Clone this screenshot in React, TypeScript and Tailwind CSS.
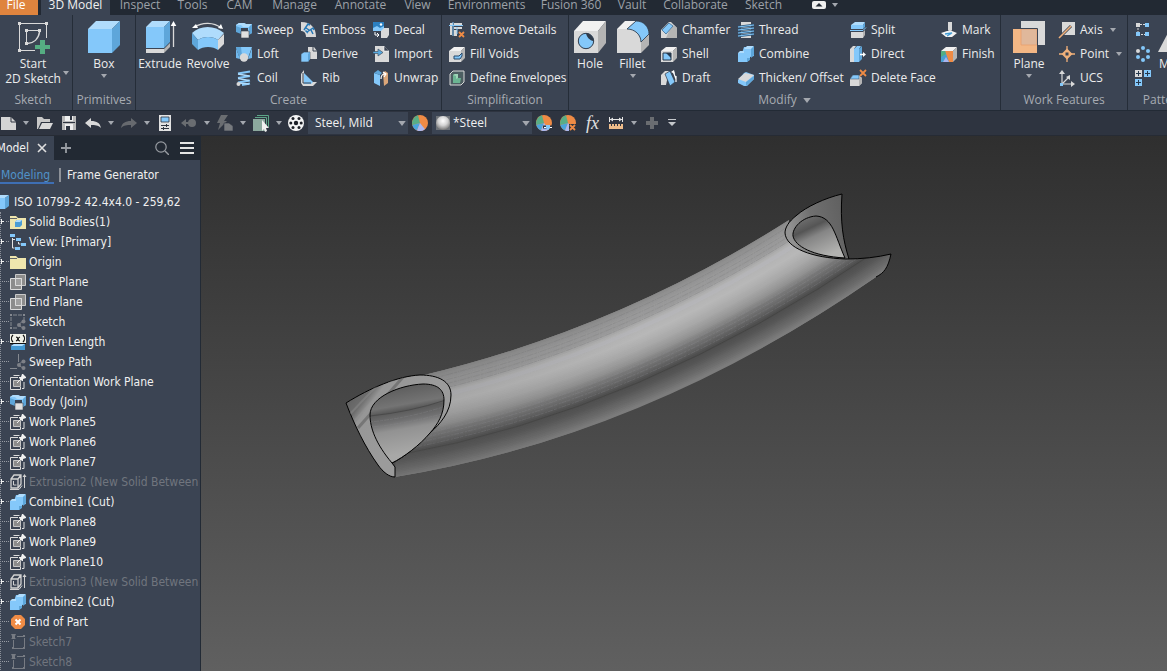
import React, { useState } from 'react';
import clsx from 'clsx';

const L = '#b0dcfc';
const B = '#84c8fa';
const D = '#5ea6da';
const G = '#d9d9d9';
const S = '#b4b4b4';
const O = '#ef8b45';

/* 32px icons for the large ribbon buttons */
const largeIcons: Record<string, React.ReactNode> = {
  sketch: (
    <>
      <path d="M2.500 4v24M4 2.500h24M29.500 4v13M4 29.500h14" fill="none" stroke={G} />
      <path d="M11 9.500h10M9.500 11v10" fill="none" stroke={G} />
      <path d="M22.500 11c-1 7-6 11-12 11.500" fill="none" stroke={G} strokeWidth="1.500" />
      <path d="M1 1h3v3H1zM28 1h3v3h-3zM1 28h3v3H1zM8 8h3v3H8zM21 8h3v3h-3zM8 21h3v3H8z" fill={G} />
      <path d="M23 19h5v5h5v4h-5v5h-5v-5h-5v-4h5z" fill="#55ad82" />
    </>
  ),
  box: (
    <>
      <path d="M0 8L8 0h24l-8 8z" fill={L} />
      <path d="M0 8h24v24H0z" fill={B} />
      <path d="M24 8l8-8v24l-8 8z" fill={D} />
    </>
  ),
  extrude: (
    <>
      <path d="M2 6l6-6h18l-6 6z" fill={L} />
      <path d="M2 6h18v21H2z" fill={B} />
      <path d="M20 6l6-6v21l-6 6z" fill={D} />
      <path d="M2 28h18v4H2z" fill={G} />
      <path d="M20 28l6-6v4l-6 6z" fill={S} />
      <path d="M29.500 3v23" stroke={G} strokeWidth="1.300" />
      <path d="M29.500 0l2.800 5h-5.600z" fill="#fff" />
    </>
  ),
  revolve: (
    <>
      <path d="M0 12C8 4 23 4 32 12l-6 7c-5-4-15-4-20 0z" fill={L} />
      <path d="M0 12l6 7v10l-6-6z" fill={D} />
      <path d="M6 19c5-4 15-4 20 0v10c-5-4-15-4-20 0z" fill={B} />
      <path d="M26 19l6-6v10l-6 6z" fill={G} />
      <path d="M3 6c7-5 19-5 26 1" fill="none" stroke={G} strokeWidth="1.300" />
      <path d="M0 7l4-4 2 4zM31 8l-5-1 3-4z" fill="#fff" />
    </>
  ),
  hole: (
    <>
      <path d="M0 10L9 0h23l-8 10z" fill="#f1f1f1" />
      <path d="M0 10h24v22H0z" fill={G} />
      <path d="M24 10l8-10v22l-8 10z" fill={S} />
      <circle cx="12" cy="20" r="7.700" fill={B} stroke="#2f3b4b" />
      <path d="M12 12.300a7.700 7.700 0 0 1 7.700 8c-4-1-7-4-7.700-8z" fill="#2f3b4b" />
    </>
  ),
  fillet: (
    <>
      <path d="M0 8L8 0h11l-9 8z" fill="#f1f1f1" />
      <path d="M0 8h10c8 0 14 6 14 14v10H0z" fill={G} />
      <path d="M24 21l8-8v11l-8 8z" fill={S} />
      <path d="M10 8l9-8c8 0 13 6 13 13l-8 8C24 14 18 8 10 8z" fill={B} stroke="#2f3b4b" strokeWidth=".8" />
    </>
  ),
  plane: (
    <>
      <path d="M8 0h24v24H8z" fill={G} />
      <path d="M0 8h24v24H0z" fill="#f3b785" />
      <path d="M8 8h16v16H8z" fill="#e0b89b" stroke="#e8a06c" strokeWidth=".8" />
      <path d="M8 7.500h16.500V24" fill="none" stroke="#3b4453" />
    </>
  ),
  mirror: <path d="M-3 31L9 8v23z" fill={G} />,
};

const pageShape = <path d="M7 1h6l3 4v8H7z" fill={G} />;
const cross = <path d="M10 10l5 5M15 10l-5 5" stroke={O} strokeWidth="1.800" />;
const cube = (
  <>
    <path d="M0 5l5-4h11l-4 4z" fill="#f1f1f1" />
    <path d="M0 5h12v11H0z" fill={G} />
    <path d="M12 5l4-4v11l-4 4z" fill={S} />
  </>
);
const colorWheel = (
  <>
    <circle cx="8" cy="8" r="8" fill={O} />
    <path d="M8 8L6 .3A8 8 0 0 0 .3 10z" fill="#58ae86" />
    <path d="M8 8L.3 10A8 8 0 0 0 5 15.400z" fill="#4aa5dc" />
    <path d="M8 8l-3 7.400a8 8 0 0 0 8-1.200z" fill="#a9b7ef" />
  </>
);
const joined = (
  <>
    <path d="M0 7h4l2-6h10v9l-4 1v2l-3 3H0z" fill={B} />
    <path d="M6 3l3-3h7l-3 3zM0 7l2-2h4v2z" fill={L} />
    <path d="M13 3l3-3v9l-3 3zM9 12h3v2l-3 2z" fill={D} />
  </>
);
const shareMark = (
  <>
    <path d="M13 7l-5 4 5 3" fill="none" stroke="#7d8087" />
    <g fill="#7d8087">
      <circle cx="13.500" cy="7.500" r="2" />
      <circle cx="9" cy="11" r="2" />
      <circle cx="13.500" cy="14" r="2" />
    </g>
  </>
);

/* 16px icons shared by the ribbon, the quick access bar and the browser */
const smallIcons: Record<string, React.ReactNode> = {
  sweep: (
    <>
      <path d="M0 3l3-2h5l2 1h6v9l-4 2V6H0z" fill={B} />
      <path d="M0 3l3-2h5l2 1h6l-3 3H7L5 3z" fill={L} />
      <path d="M0 4l5 2v6L0 10zM13 5l3-3v9l-3 2z" fill={D} />
      <path d="M5 9h8v7H5z" fill="#e0e0e0" stroke="#3b4453" strokeWidth=".6" />
    </>
  ),
  loft: (
    <>
      <path d="M0 1h16l-4 11H4z" fill={B} />
      <path d="M0 1h5l1 9-2 3z" fill={D} />
      <path d="M0 2v10l4 1zM16 2v10l-4 1z" fill="#71b8ec" />
      <circle cx="8" cy="11.500" r="4.200" fill={G} />
    </>
  ),
  coil: (
    <>
      <path d="M2 3.500l12-2M2 8l12-2M2 12.500l12-2M6 15l8-1.500" stroke={B} strokeWidth="2.200" />
      <path d="M2 4l11 2M2 8.500l11 2M3 13l10 1" stroke={L} strokeWidth="1.300" />
      <circle cx="2.500" cy="14" r="2" fill={G} />
    </>
  ),
  emboss: (
    <>
      <path d="M0 0c10 0 15 6 15 15H5C5 11 3 9 0 9z" fill={G} />
      <path d="M3 8l4-6 2 1M5 6l3 2M6 10l6-4 1 2M4.500 8.500L7 11M10 8l2 4" fill="none" stroke="#2578b7" strokeWidth="1.500" />
    </>
  ),
  derive: (
    <>
      {pageShape}
      <path d="M0 8l3-2h6v7l-2 3H0z" fill={B} stroke="#3b4453" strokeWidth=".6" />
      <path d="M7 8l2-2v7l-2 3z" fill={D} />
      <path d="M12 1v4h4" fill="none" stroke="#3b4453" />
    </>
  ),
  rib: (
    <>
      <path d="M0 4l3-4v9l8 3h5l-4 4H2l-2-3z" fill={G} />
      <path d="M3 3l9 9-2 2H3z" fill={B} />
      <path d="M2 3v10h8" fill="none" stroke="#3b4453" />
    </>
  ),
  decal: (
    <>
      <path d="M0 0h11v9H0z" fill="#2b7fc0" />
      <path d="M0 6l4-2 3 2 4-2v5H0z" fill={B} />
      <circle cx="8" cy="2.500" r="1.200" fill="#fff" />
      <path d="M8 9l3-3h5v7l-2 3H8z" fill={G} />
      <path d="M2 10v3h4M4 11l2 2-2 2" fill="none" stroke="#fff" />
    </>
  ),
  import: (
    <>
      <path d="M2 0h9l5 5v11H2z" fill={G} />
      <path d="M11 0v5h5" fill="#3b4453" stroke="#fff" strokeWidth=".6" />
      <path d="M0 5.500h5V3l5 3.500L5 10V7.500H0z" fill="#58a9df" stroke="#3b4453" strokeWidth=".6" />
    </>
  ),
  unwrap: (
    <>
      <path d="M1 3l6 2v11l-6-3z" fill={B} />
      <path d="M1 3l4-3 4 3-2 2z" fill={D} />
      <path d="M10 3l2-2 3 2v10l-4 3z" fill="#dba679" />
      <path d="M8 9c0-3 1-5 4-5M10 2l3 2-2 3" fill="none" stroke="#fff" strokeWidth="1.200" />
    </>
  ),
  removeDetails: (
    <>
      <path d="M1 1h3v2H1zM5 1h8v2H5zM1 4h2v9H1zM5 5h8v2H5zM5 8h3v6H5z" fill={G} />
      <path d="M4 0v14M0 3.500h14M8 5v7" stroke={B} />
      {cross}
    </>
  ),
  fillVoids: (
    <>
      {cube}
      <path d="M5 10h5l3-3v3l-2 3H5z" fill={B} stroke="#26496b" />
    </>
  ),
  envelopes: (
    <>
      <path d="M1 4l3-3h11v11l-3 3H1z" fill="#4d5f62" stroke={G} />
      <path d="M4 5l2-1h3v4h3l-1 5H4z" fill="#6bb592" />
      <path d="M4 5l2-1h3v4l-2 1V6z" fill="#9dd3b6" />
    </>
  ),
  chamfer: (
    <>
      <path d="M0 8l8-8h2l6 6v10H0z" fill={G} />
      <path d="M8 9l5-6 3 3v10H5z" fill={S} />
      <path d="M1 8l7-7 4 3-7 8z" fill={B} stroke="#2f5f87" strokeWidth=".7" />
    </>
  ),
  shell: (
    <>
      {cube}
      <path d="M2 7h8v7H2z" fill={B} stroke="#26394d" />
      <path d="M5 7h5v5z" fill="#26394d" />
    </>
  ),
  draft: (
    <>
      <path d="M0 5l4-4h4L5 15H0z" fill={G} />
      <path d="M4 4l5-3 5 11-5 4z" fill={B} stroke="#2f3b4b" strokeWidth=".7" />
      <path d="M12 1l3 8M15 12V6" fill="none" stroke="#fff" strokeWidth="1.200" />
      <path d="M10 2l3-2 1 4z" fill="#fff" />
    </>
  ),
  thread: (
    <>
      <path d="M3 0h10v16H3z" fill={G} />
      <path d="M0 5l16-2M0 8l16-2M0 11l16-2M0 14l16-2" stroke="#2d5272" strokeWidth="2.400" />
      <path d="M0 5l16-2M0 8l16-2M0 11l16-2M0 14l16-2" stroke={B} strokeWidth="1.200" />
    </>
  ),
  combine: joined,
  thicken: (
    <>
      <path d="M0 10l6-7 2-1 8 3v4l-7 7H6l-6-3z" fill={B} />
      <path d="M0 9l7-6 9 2-8 7z" fill={G} />
      <path d="M8 12l8-6v3l-8 7z" fill={D} />
    </>
  ),
  split: (
    <>
      <path d="M1 3l4-3h10l-2 3z" fill={L} />
      <path d="M1 3h12v4H1z" fill={B} />
      <path d="M13 3l2-3v5l-2 2z" fill={D} />
      <path d="M0 8.500h13l3-3" fill="none" stroke={B} />
      <path d="M1 10h12v6H1z" fill={G} />
      <path d="M13 10l2-2v5l-2 3z" fill={S} />
    </>
  ),
  direct: (
    <>
      <path d="M0 3l3-3h3L4 3v13H0z" fill={G} />
      <path d="M4 3l3-3h4L9 3v13H4z" fill={B} />
      <path d="M9 3l3-3v13l-3 3z" fill={D} />
      <path d="M10 8.500h4" stroke="#fff" strokeWidth="1.500" />
      <path d="M13 6l3 2.500-3 2.500z" fill="#fff" />
    </>
  ),
  deleteFace: (
    <>
      <path d="M0 9l3-4h6l3 4v4l-3 3H0z" fill={G} />
      <path d="M9 9l3-2v6l-3 3z" fill={S} />
      <path d="M0 9l3-4h6v4z" fill={B} stroke="#30445a" strokeWidth=".5" />
      <path d="M10 0l6 6M16 0l-6 6" stroke={O} strokeWidth="1.800" />
    </>
  ),
  mark: (
    <>
      <path d="M7 0h4v8l-2 3-2-3z" fill={G} />
      <path d="M0 11l6-2h5l5 2-5 4H5z" fill="#f2f2f2" />
      <path d="M4 12l7-1-5 3" fill="none" stroke="#409bd5" strokeWidth="1.300" />
    </>
  ),
  finish: (
    <>
      {cube}
      <path d="M0 5h12v11H0z" fill={O} />
      <path d="M0 5h4l4 11H0z" fill="#4a9fd0" />
      <path d="M0 5h4l1 3-5 3z" fill="#54ae82" />
      <path d="M5 11l3 5H2z" fill="#aab4ef" />
    </>
  ),
  axis: (
    <>
      <path d="M3 0h13v13H3z" fill={G} />
      <path d="M0 16L12 4" stroke="#3b4453" strokeWidth="3" />
      <path d="M0 16L12 4" stroke="#f0b07a" strokeWidth="1.600" />
    </>
  ),
  point: (
    <>
      <path d="M8 0v16M0 8h16" stroke="#f0b07a" strokeWidth="1.300" />
      <path d="M8 2.500L13.500 8 8 13.500 2.500 8z" fill="#f0b07a" />
      <path d="M6.500 6.500h3v3h-3z" fill="#3b4453" />
    </>
  ),
  ucs: (
    <>
      <path d="M3 13V2M3 14h11M4 13l6-6" fill="none" stroke={G} strokeWidth="1.200" />
      <path d="M3 0l3 4H0zM16 14l-4 3v-6zM11 5v5L7 7z" fill={G} />
      <path d="M1 13h3v3H1z" fill={B} />
    </>
  ),
  rectPattern: (
    <>
      <path d="M5 2.500h6M3 6v5M6 12.500h5" stroke={G} strokeDasharray="2 1" />
      <path d="M1 1h4v4H1z" fill={G} />
      <path d="M10 1h4v4h-4zM1 10h4v4H1zM10 10h4v4h-4z" fill={B} />
    </>
  ),
  circPattern: (
    <>
      <circle cx="3" cy="5" r="2" fill={G} />
      <g fill={B}>
        <circle cx="8" cy="2" r="2" />
        <circle cx="13" cy="5" r="2" />
        <circle cx="13" cy="11" r="2" />
        <circle cx="8" cy="14" r="2" />
        <circle cx="3" cy="11" r="2" />
      </g>
    </>
  ),
  sketchPattern: (
    <>
      <path d="M0 0h7v7H0z" fill={G} />
      <path d="M9 0h7v7H9zM0 9h7v7H0z" fill={B} />
      <path d="M3.500 1v5M1 3.500h5M12.500 1v5M10 3.500h5M3.500 10v5M1 12.500h5" stroke="#26394d" />
    </>
  ),
  newFile: (
    <>
      <path d="M1 2h10l5 5v8H1z" fill="#d4d4d4" />
      <path d="M11 2v5h5" fill="none" stroke="#2e3440" />
    </>
  ),
  open: (
    <>
      <path d="M0 2h5l2 2h6v3H4L1 14H0z" fill="#c8c8c8" />
      <path d="M5 8h11l-3 6H2z" fill="#d9d9d9" />
    </>
  ),
  save: (
    <>
      <path d="M1 1h14v14H1z" fill="#b9b9b9" />
      <path d="M4 1h8v5H4zM4 9h8v6H4z" fill="#efefef" />
      <path d="M9 1h2v4H9zM5 11h4v4H5zM2 7h12v1H2z" fill="#2e3440" />
    </>
  ),
  undo: <path d="M0 8l6-5v3c6 0 9 2 10 7-3-3-6-3-10-3v3z" fill="#d9d9d9" />,
  redo: <path d="M16 8l-6-5v3C4 6 1 8 0 13c3-3 6-3 10-3v3z" fill="#66696e" />,
  properties: (
    <>
      <path d="M2 0h12v16H2z" fill="#e2e2e2" />
      <path d="M4 2h8v5H4z" fill={B} stroke="#2e3440" strokeWidth=".8" />
      <path d="M4 10.500h8M4 13.500h8M9.500 9v3M6.500 12v3" stroke="#2e3440" />
    </>
  ),
  back: (
    <>
      <circle cx="11" cy="8" r="4" fill="#6a6d71" />
      <path d="M0 8l5-4v8zM4 7h7v2H4z" fill="#6a6d71" />
    </>
  ),
  update: (
    <>
      <path d="M4 0h7L7 6h3L1 15l2-7H0z" fill="#6a6d71" />
      <path d="M7 8h5l4 3v5H7z" fill="#777a7e" stroke="#2e3440" strokeWidth=".6" />
    </>
  ),
  selectFilter: (
    <>
      <path d="M4 .5h11.500V12M2 2.500h11.500V12" fill="none" stroke="#5da588" />
      <path d="M0 4h12v12H0z" fill="#8ca99e" />
      <path d="M9 5l7 8h-3l1 3-2 1-1-3-2 2z" fill="#f2f2f2" />
    </>
  ),
  ball: (
    <>
      <circle cx="8" cy="8" r="8" fill="#f4f4f4" />
      <g fill="#1c1f26">
        <circle cx="8" cy="8" r="2.200" />
        <circle cx="5" cy="3.500" r="1.500" />
        <circle cx="11" cy="3.500" r="1.500" />
        <circle cx="2.800" cy="8" r="1.500" />
        <circle cx="13.200" cy="8" r="1.500" />
        <circle cx="5" cy="12.500" r="1.500" />
        <circle cx="11" cy="12.500" r="1.500" />
      </g>
    </>
  ),
  wheel: colorWheel,
  adjust: (
    <>
      {colorWheel}
      <path d="M7 12h9" stroke="#2e3440" strokeWidth="3" />
      <path d="M8 12.500h8" stroke="#fff" />
      <path d="M10 10h4v3l-2 2-2-2z" fill={B} />
    </>
  ),
  clear: (
    <>
      {colorWheel}
      <path d="M9 9h7v7H9z" fill="#2e3440" />
      {cross}
    </>
  ),
  measure: (
    <>
      <path d="M1.500 2v5M14.500 2v5M2 4.500h12" stroke="#e5e5e5" />
      <path d="M5 2.500v4l-3-2zM11 2.500v4l3-2z" fill="#e5e5e5" />
      <path d="M1 9h14v5H1z" fill="#eebc8a" />
      <path d="M3.500 9v2M6.500 9v2M9.500 9v2M12.500 9v2" stroke="#2e3440" />
    </>
  ),
  plus: <path d="M6 2h4v4h4v4h-4v4H6v-4H2V6h4z" fill="#6a6d71" />,
  part: (
    <>
      <path d="M0 4l4-3h10l-4 3z" fill={L} />
      <path d="M0 4h10v11H0z" fill={B} />
      <path d="M10 4l4-3v11l-4 3z" fill={D} />
    </>
  ),
  folder: (
    <>
      <path d="M0 2h6l2 2h8v11H0z" fill="#efe6ae" />
      <path d="M0 4.500h7" stroke="#3b4453" strokeWidth=".8" />
    </>
  ),
  bodies: (
    <>
      <path d="M0 2h6l2 2h8v11H0z" fill="#efe6ae" />
      <path d="M0 4.500h7" stroke="#3b4453" strokeWidth=".8" />
      <path d="M5 8l2-2h5v5l-2 2H5z" fill="#4c9dd5" />
      <path d="M5 8l2-2h5l-2 2z" fill={L} />
    </>
  ),
  view: (
    <>
      <path d="M0 0h5v3H0zM6 4h5v3H6zM11 9h5v3h-5zM5 13h5v3H5z" fill={B} />
      <path d="M2.500 4v10h2M3 5.500h2M8.500 8v2h2" fill="none" stroke="#e2e2e2" />
    </>
  ),
  plainPlane: (
    <>
      <path d="M5.500.5h10v11h-10z" fill="#8c8c8c" stroke="#c9c9c9" />
      <path d="M.5 4.500h11v11H.5z" fill="#8c8c8c" stroke="#dcdcdc" />
      <path d="M5.500 4.500h6v7h-6z" fill="#a0a0a0" stroke="#dcdcdc" />
    </>
  ),
  sharedSketch: (
    <>
      <path d="M1 3v9M3 1h9M14 3v3M3 14h4" stroke="#858990" strokeDasharray="4 1" />
      <path d="M0 0h2v2H0zM13 0h2v2h-2zM0 13h2v2H0z" fill="#858990" />
      {shareMark}
    </>
  ),
  sharedPath: (
    <>
      <path d="M8.500 0v8M0 14.500h7" stroke="#858990" />
      {shareMark}
    </>
  ),
  parameter: (
    <>
      <path d="M0 0h16v9H0z" fill="#f1f1e8" />
      <path d="M3 1C1 3 1 6 3 8M13 1c2 2 2 5 0 7M6 3c3 0 1 4 4 4M10 3C7 4 9 6 6 7" fill="none" stroke="#111" strokeWidth="1.200" />
      <path d="M0 9h16v1H0z" fill="#111" />
      <path d="M1 12l3-2h11v6H1z" fill="#4398d2" />
      <path d="M1 12l3-2h11l-3 2z" fill={L} />
    </>
  ),
  pinnedPlane: (
    <>
      <path d="M8 3.500H.5v12h10V13M3.500 1.500h6M14 8v6.500h-2" fill="none" stroke="#dcdcdc" />
      <path d="M3.500 6.500h7v6h-7z" fill="#8c8c8c" stroke="#c4c4c4" />
      <path d="M7 9l4-4" stroke="#f0f0f0" />
      <path d="M9 3h2l1-3h1l3 3v1l-3 1v2h-1L9 4z" fill="#f0f0f0" />
    </>
  ),
  extrusion: (
    <>
      <path d="M1 5l3-4h7v9l-3 4H1zM1 5h7v9M8 5l3-4" fill="none" stroke="#d2d2d2" strokeWidth="1.300" />
      <path d="M3.500 7v4h3M0 15.500h9l3-4M14.500 2v12" fill="none" stroke="#d2d2d2" />
      <path d="M14.500 0l2 3h-4z" fill="#d2d2d2" />
    </>
  ),
  endOfPart: (
    <>
      <path d="M5 1h6l4 4v6l-4 4H5l-4-4V5z" fill={O} />
      <path d="M5.500 5.500l5 5M10.500 5.500l-5 5" stroke="#fff" strokeWidth="2" />
    </>
  ),
  pinnedSketch: (
    <>
      <path d="M3.500 6v8.500h10M14.500 4v9M7 2.500h6" fill="none" stroke="#777b83" />
      <path d="M1 0h5L5 2v2l1 1H1l1-1V2zM13 1h2v2h-2zM2 13h2v2H2zM13 13h2v2h-2z" fill="#777b83" />
    </>
  ),
};

function Icon({ name, className }: { name: string; className?: string }) {
  return (
    <svg viewBox="0 0 16 16" className={clsx('h-4 w-4 shrink-0 overflow-visible', className)} aria-hidden="true">
      {smallIcons[name]}
    </svg>
  );
}

function Caret({ className }: { className?: string }) {
  return (
    <svg viewBox="0 0 6 4" className={clsx('h-1 w-1.5 shrink-0', className)} aria-hidden="true">
      <path d="M0 0h6L3 4z" fill="#a4a8af" />
    </svg>
  );
}

type BigProps = { icon: string; lines: string[]; caret?: boolean; className: string };

function BigButton({ icon, lines, caret, className }: BigProps) {
  return (
    <button className={clsx('flex shrink-0 flex-col items-center pt-[3px] text-[#ececec]', className)}>
      <svg viewBox="0 0 32 32" className="mb-[3px] h-8 w-8 shrink-0 overflow-visible" aria-hidden="true">
        {largeIcons[icon]}
      </svg>
      {lines.map((line) => (
        <span key={line} className="leading-[15px] whitespace-nowrap">
          {line}
        </span>
      ))}
      {caret && <Caret className="mt-[3px]" />}
    </button>
  );
}

type Command = { icon: string; label: string; caret?: boolean };

function CommandColumn({ items, className }: { items: Command[]; className: string }) {
  return (
    <div className={clsx('flex shrink-0 flex-col', className)}>
      {items.map((item) => (
        <button key={item.icon} className="flex h-6 items-center gap-[5px] whitespace-nowrap text-[#ececec]">
          <Icon name={item.icon} />
          <span>{item.label}</span>
          {item.caret && <Caret className="ml-0.5" />}
        </button>
      ))}
    </div>
  );
}

type PanelProps = { title: string; className: string; caret?: boolean; children: React.ReactNode };

function RibbonPanel({ title, className, caret, children }: PanelProps) {
  return (
    <section className={clsx('flex shrink-0 flex-col border-r border-[#252d38] pt-[3px]', className)}>
      <div className="flex h-[72px]">{children}</div>
      <h2 className="flex h-5 items-center justify-center gap-1.5 whitespace-nowrap text-[#a7abb2]">
        {title}
        {caret && <Caret className="h-[5px] w-2" />}
      </h2>
    </section>
  );
}

const tabs = [
  { label: 'Inspect', width: 'w-[58px]' },
  { label: 'Tools', width: 'w-[47px]' },
  { label: 'CAM', width: 'w-[47px]' },
  { label: 'Manage', width: 'w-[63px]' },
  { label: 'Annotate', width: 'w-[69px]' },
  { label: 'View', width: 'w-[45px]' },
  { label: 'Environments', width: 'w-[93px]' },
  { label: 'Fusion 360', width: 'w-[76px]' },
  { label: 'Vault', width: 'w-[46px]' },
  { label: 'Collaborate', width: 'w-[81px]' },
  { label: 'Sketch', width: 'w-[55px]' },
];

function TabStrip() {
  return (
    <nav className="flex h-[15px] shrink-0 items-start bg-[#222933] leading-[10px] text-[#9da1a8]">
      <button className="h-full w-[38px] shrink-0 bg-[#df843e] pr-1.5 pb-[5px] text-white">File</button>
      <button className="ml-[3px] h-full w-[69px] shrink-0 bg-[#3b4453] pb-[5px] whitespace-nowrap text-[#f0f0f0]">
        3D Model
      </button>
      <div className="flex pl-px">
        {tabs.map((tab) => (
          <button key={tab.label} className={clsx('shrink-0 whitespace-nowrap', tab.width)}>
            {tab.label}
          </button>
        ))}
      </div>
      <button aria-label="Minimize ribbon" className="ml-[21px] flex items-center gap-1.5 pt-px">
        <svg viewBox="0 0 14 8" className="h-2 w-3.5">
          <rect width="14" height="8" rx="2" fill="#efefef" />
          <path d="M3.500 5.500h7L7 2z" fill="#222933" />
        </svg>
        <Caret />
      </button>
    </nav>
  );
}

function Ribbon() {
  return (
    <div className="flex shrink-0 overflow-hidden border-b border-[#222a35] bg-[#3b4453]">
      <RibbonPanel title="Sketch" className="w-[73px] pr-1.5">
        <div className="relative flex w-full justify-center">
          <BigButton icon="sketch" lines={['Start', '2D Sketch']} className="w-full" />
          <Caret className="absolute top-[53px] -right-[3px]" />
        </div>
      </RibbonPanel>

      <RibbonPanel title="Primitives" className="w-[63px]">
        <BigButton icon="box" lines={['Box']} caret className="w-full" />
      </RibbonPanel>

      <RibbonPanel title="Create" className="w-[306px]">
        <BigButton icon="extrude" lines={['Extrude']} className="w-12" />
        <BigButton icon="revolve" lines={['Revolve']} className="mr-1 w-12" />
        <CommandColumn
          className="w-[65px]"
          items={[
            { icon: 'sweep', label: 'Sweep' },
            { icon: 'loft', label: 'Loft' },
            { icon: 'coil', label: 'Coil' },
          ]}
        />
        <CommandColumn
          className="w-[72px]"
          items={[
            { icon: 'emboss', label: 'Emboss' },
            { icon: 'derive', label: 'Derive' },
            { icon: 'rib', label: 'Rib' },
          ]}
        />
        <CommandColumn
          className="w-16"
          items={[
            { icon: 'decal', label: 'Decal' },
            { icon: 'import', label: 'Import' },
            { icon: 'unwrap', label: 'Unwrap' },
          ]}
        />
      </RibbonPanel>

      <RibbonPanel title="Simplification" className="w-[127px]">
        <CommandColumn
          className="pl-[7px]"
          items={[
            { icon: 'removeDetails', label: 'Remove Details' },
            { icon: 'fillVoids', label: 'Fill Voids' },
            { icon: 'envelopes', label: 'Define Envelopes' },
          ]}
        />
      </RibbonPanel>

      <RibbonPanel title="Modify" caret className="w-[432px]">
        <BigButton icon="hole" lines={['Hole']} className="w-[42px]" />
        <BigButton icon="fillet" lines={['Fillet']} caret className="mr-[7px] w-[43px]" />
        <CommandColumn
          className="w-[77px]"
          items={[
            { icon: 'chamfer', label: 'Chamfer' },
            { icon: 'shell', label: 'Shell' },
            { icon: 'draft', label: 'Draft' },
          ]}
        />
        <CommandColumn
          className="w-28"
          items={[
            { icon: 'thread', label: 'Thread' },
            { icon: 'combine', label: 'Combine' },
            { icon: 'thicken', label: 'Thicken/ Offset' },
          ]}
        />
        <CommandColumn
          className="w-[91px]"
          items={[
            { icon: 'split', label: 'Split' },
            { icon: 'direct', label: 'Direct' },
            { icon: 'deleteFace', label: 'Delete Face' },
          ]}
        />
        <CommandColumn
          className="w-14"
          items={[
            { icon: 'mark', label: 'Mark' },
            { icon: 'finish', label: 'Finish' },
          ]}
        />
      </RibbonPanel>

      <RibbonPanel title="Work Features" className="w-[127px]">
        <BigButton icon="plane" lines={['Plane']} caret className="mr-0.5 w-14" />
        <CommandColumn
          className="w-16"
          items={[
            { icon: 'axis', label: 'Axis', caret: true },
            { icon: 'point', label: 'Point', caret: true },
            { icon: 'ucs', label: 'UCS' },
          ]}
        />
      </RibbonPanel>

      <RibbonPanel title="Pattern" className="w-[72px]">
        <CommandColumn
          className="w-[29px] pl-[7px]"
          items={[
            { icon: 'rectPattern', label: '' },
            { icon: 'circPattern', label: '' },
            { icon: 'sketchPattern', label: '' },
          ]}
        />
        <BigButton icon="mirror" lines={['Mirror']} className="w-10" />
      </RibbonPanel>
    </div>
  );
}

function ToolButton({ icon, label, caret, className }: { icon: string; label: string; caret?: boolean; className: string }) {
  return (
    <button aria-label={label} className={clsx('flex shrink-0 items-center gap-[7px]', className)}>
      <Icon name={icon} />
      {caret && <Caret />}
    </button>
  );
}

function Combo({ label, value, swatch }: { label: string; value: string; swatch?: boolean }) {
  return (
    <div className="relative flex h-[22px] w-[100px] shrink-0 items-center bg-[#3b4453]">
      {swatch && (
        <svg viewBox="0 0 16 16" className="ml-[3px] h-4 w-4 shrink-0" aria-hidden="true">
          <defs>
            <radialGradient id="steel" cx=".5" cy=".35" r=".65">
              <stop offset="0" stopColor="#fff" />
              <stop offset=".5" stopColor="#d4d4d4" />
              <stop offset="1" stopColor="#777" />
            </radialGradient>
          </defs>
          <path d="M1 1h14v14H1z" fill="#6d7278" />
          <circle cx="8" cy="8" r="7" fill="url(#steel)" />
        </svg>
      )}
      <select
        aria-label={label}
        className={clsx('min-w-0 flex-1 appearance-none bg-transparent text-[#f0f0f0] outline-none', swatch ? 'pl-0.5' : 'pl-[7px]')}
      >
        <option>{value}</option>
      </select>
      <Caret className="pointer-events-none absolute right-0.5 h-[5px] w-2" />
    </div>
  );
}

function QuickAccessBar() {
  return (
    <div className="flex h-[25px] shrink-0 items-center overflow-hidden border-b border-[#262b34] bg-[#2e3440]">
      <ToolButton icon="newFile" label="New" caret className="w-[37px]" />
      <ToolButton icon="open" label="Open" className="w-6" />
      <ToolButton icon="save" label="Save" className="w-6" />
      <ToolButton icon="undo" label="Undo" caret className="w-9" />
      <ToolButton icon="redo" label="Redo" caret className="w-9" />
      <ToolButton icon="properties" label="iProperties" className="w-6" />
      <ToolButton icon="back" label="Return" caret className="w-9" />
      <ToolButton icon="update" label="Update" caret className="w-9" />
      <ToolButton icon="selectFilter" label="Select" caret className="w-[35px]" />
      <ToolButton icon="ball" label="Material" className="w-5" />
      <Combo label="Material" value="Steel, Mild" />
      <ToolButton icon="wheel" label="Appearance" className="w-6 pl-1" />
      <Combo label="Appearance" value="*Steel" swatch />
      <ToolButton icon="adjust" label="Adjust" className="w-7 pl-1" />
      <ToolButton icon="clear" label="Clear" className="w-6" />
      <button aria-label="Parameters" className="w-6 shrink-0 pl-0.5 text-left font-['Liberation_Serif',serif] text-[18px] leading-5 text-[#e0e0e0] italic">
        fx
      </button>
      <ToolButton icon="measure" label="Measure" caret className="w-9" />
      <ToolButton icon="plus" label="Add" className="w-6" />
      <button aria-label="Customize" className="shrink-0">
        <svg viewBox="0 0 8 8" className="h-2 w-2">
          <path d="M0 .5h8" stroke="#c5c8cc" />
          <path d="M0 3h8L4 7z" fill="#c5c8cc" />
        </svg>
      </button>
    </div>
  );
}

type TreeNode = { icon: string; label: string; plus?: boolean; dim?: boolean };

const treeNodes: TreeNode[] = [
  { icon: 'bodies', label: 'Solid Bodies(1)', plus: true },
  { icon: 'view', label: 'View: [Primary]', plus: true },
  { icon: 'folder', label: 'Origin', plus: true },
  { icon: 'plainPlane', label: 'Start Plane' },
  { icon: 'plainPlane', label: 'End Plane' },
  { icon: 'sharedSketch', label: 'Sketch' },
  { icon: 'parameter', label: 'Driven Length', plus: true },
  { icon: 'sharedPath', label: 'Sweep Path' },
  { icon: 'pinnedPlane', label: 'Orientation Work Plane' },
  { icon: 'sweep', label: 'Body (Join)', plus: true },
  { icon: 'pinnedPlane', label: 'Work Plane5' },
  { icon: 'pinnedPlane', label: 'Work Plane6' },
  { icon: 'pinnedPlane', label: 'Work Plane7' },
  { icon: 'extrusion', label: 'Extrusion2 (New Solid Between', plus: true, dim: true },
  { icon: 'combine', label: 'Combine1 (Cut)', plus: true },
  { icon: 'pinnedPlane', label: 'Work Plane8' },
  { icon: 'pinnedPlane', label: 'Work Plane9' },
  { icon: 'pinnedPlane', label: 'Work Plane10' },
  { icon: 'extrusion', label: 'Extrusion3 (New Solid Between', plus: true, dim: true },
  { icon: 'combine', label: 'Combine2 (Cut)', plus: true },
  { icon: 'endOfPart', label: 'End of Part' },
  { icon: 'pinnedSketch', label: 'Sketch7', dim: true },
  { icon: 'pinnedSketch', label: 'Sketch8', dim: true },
];

function ModelBrowser() {
  const [selected, setSelected] = useState<number | null>(null);

  return (
    <aside className="flex w-[201px] shrink-0 flex-col overflow-hidden border-r border-[#222a35] bg-[#3b4453] font-['DejaVu_Sans_Condensed','DejaVu_Sans',sans-serif] text-[12px] text-[#f0f0f0]">
      <div className="flex h-6 shrink-0 items-center bg-[#222933]">
        <div className="flex h-full w-[54px] shrink-0 items-center justify-end gap-2 bg-[#3b4453] pr-[7px]">
          <span>Model</span>
          <button aria-label="Close">
            <svg viewBox="0 0 10 10" className="h-2.5 w-2.5">
              <path d="M1 1l8 8M9 1L1 9" stroke="#e0e0e0" strokeWidth="1.600" />
            </svg>
          </button>
        </div>
        <button aria-label="Add browser" className="ml-[7px]">
          <svg viewBox="0 0 10 10" className="h-2.5 w-2.5">
            <path d="M5 0v10M0 5h10" stroke="#999da3" strokeWidth="1.800" />
          </svg>
        </button>
        <button aria-label="Search" className="ml-auto">
          <svg viewBox="0 0 14 14" className="h-3.5 w-3.5">
            <circle cx="6" cy="6" r="5.200" fill="none" stroke="#989ca2" strokeWidth="1.200" />
            <path d="M10 10l4 4" stroke="#989ca2" strokeWidth="1.400" />
          </svg>
        </button>
        <button aria-label="Browser menu" className="mr-1.5 ml-[11px]">
          <svg viewBox="0 0 14 12" className="h-3 w-3.5">
            <path d="M0 1h14M0 6h14M0 11h14" stroke="#e4e4e4" strokeWidth="2" />
          </svg>
        </button>
      </div>

      <div className="flex h-8 shrink-0 items-start whitespace-nowrap">
        <button className="h-6 w-[54px] shrink-0 border-b-2 border-[#3e6fb4] pt-2 pl-px text-left leading-[14px] text-[#5193c9]">
          Modeling
        </button>
        <span className="mt-2 ml-[5px] h-3.5 w-0.5 bg-[#8d9198]" />
        <button className="mt-2 ml-1.5 leading-[14px]">Frame Generator</button>
      </div>

      <div className="flex h-5 shrink-0 items-center gap-[3px] whitespace-nowrap">
        <Icon name="part" className="-ml-[5px]" />
        <span>ISO 10799-2 42.4x4.0 - 259,62</span>
      </div>
      <ul className="border-l border-dotted border-[#8b9099]">
        {treeNodes.map((node, i) => (
          <li key={i}>
            <button
              onClick={() => setSelected(i)}
              className={clsx(
                'flex h-5 w-full items-center whitespace-nowrap',
                node.dim && 'text-[#70757e]',
                selected === i && 'bg-[#4b5669]',
              )}
            >
              <svg viewBox="0 0 9 8" className="h-2 w-[9px] shrink-0" aria-hidden="true">
                {node.plus ? (
                  <>
                    <path d="M0 3.500h3M.5 1v5" stroke="#f0f0f0" />
                    <path d="M5 3.500h4" stroke="#9a9ea5" strokeDasharray="1 1" />
                  </>
                ) : (
                  <path d="M1 3.500h8" stroke="#9a9ea5" strokeDasharray="1 1" />
                )}
              </svg>
              <Icon name={node.icon} className="mr-[3px]" />
              <span>{node.label}</span>
            </button>
          </li>
        ))}
      </ul>
    </aside>
  );
}

/* Upper and lower silhouettes of the pipe as quadratic curves */
const upper = [400, 380, 618, 332, 800, 212];
const lower = [395, 478, 647, 436, 902, 261];

const shades: [number, number][] = [
  [0, 132],
  [0.05, 144],
  [0.12, 153],
  [0.19, 156],
  [0.24, 178],
  [0.35, 184],
  [0.46, 170],
  [0.56, 148],
  [0.63, 122],
  [0.7, 102],
  [0.77, 78],
  [0.83, 84],
  [0.92, 104],
  [1, 124],
];

function shadeAt(v: number) {
  const i = Math.max(1, shades.findIndex(([stop]) => stop >= v));
  const [v0, c0] = shades[i - 1];
  const [v1, c1] = shades[i];
  const c = Math.round(c0 + ((c1 - c0) * (v - v0)) / (v1 - v0));
  return `rgb(${c},${c},${c})`;
}

function curveAt(v: number) {
  const p = upper.map((u, i) => (u + (lower[i] - u) * v).toFixed(1));
  return `M${p[0]} ${p[1]}Q${p[2]} ${p[3]} ${p[4]} ${p[5]}`;
}

const bands = Array.from({ length: 61 }, (_, i) => i / 60);
const streaks = [0.06, 0.08, 0.11, 0.13, 0.15, 0.17, 0.19, 0.6, 0.62, 0.64, 0.66, 0.68, 0.7, 0.72];

function PipeModel() {
  return (
    <svg viewBox="201 136 966 535" className="h-full w-full" role="img" aria-label="Bent pipe with coped ends">
      <defs>
        <clipPath id="body">
          <path d="M420 376Q618 329 789 220L786 232C787 246 810 258 846 259Q870 259 891 254C888 268 884 273 876 277Q647 436 395 477L392 463C440 430 451 410 451 395C451 380 435 376 420 375z" />
        </clipPath>
        <clipPath id="face-outline">
          <path d="M346 403C370 388 398 376 420 375C438 375 451 381 451 395C451 412 440 424 430 433C418 445 405 457 392 463L395 467V477C389 477 383 472 378 465C365 447 354 424 346 403z" />
        </clipPath>
        <clipPath id="leftHole">
          <path d="M392 463C376 444 370 428 370 415C370 397 400 385 423 384C438 384 444 390 444 400C444 414 438 424 430 433C420 445 404 457 392 463z" />
        </clipPath>
        <linearGradient id="face" x1="346" y1="390" x2="400" y2="430" gradientUnits="userSpaceOnUse">
          <stop offset="0" stopColor="#5b5b5b" />
          <stop offset=".3" stopColor="#6e6e6e" />
          <stop offset=".42" stopColor="#969696" />
          <stop offset="1" stopColor="#9b9b9b" />
        </linearGradient>
        <linearGradient id="bore" x1="400" y1="384" x2="412" y2="452" gradientUnits="userSpaceOnUse">
          <stop offset="0" stopColor="#5a5a5a" />
          <stop offset=".3" stopColor="#747474" />
          <stop offset=".38" stopColor="#5a5a5a" />
          <stop offset=".52" stopColor="#707071" />
          <stop offset=".65" stopColor="#929292" />
          <stop offset="1" stopColor="#a8a8a7" />
        </linearGradient>
        <linearGradient id="rightFace" x1="790" y1="230" x2="848" y2="215" gradientUnits="userSpaceOnUse">
          <stop offset="0" stopColor="#929292" />
          <stop offset=".4" stopColor="#707070" />
          <stop offset="1" stopColor="#5f5f5f" />
        </linearGradient>
        <linearGradient id="rightBore" x1="805" y1="215" x2="825" y2="257" gradientUnits="userSpaceOnUse">
          <stop offset="0" stopColor="#747474" />
          <stop offset=".3" stopColor="#555" />
          <stop offset=".5" stopColor="#858585" />
          <stop offset="1" stopColor="#b2b2b0" />
        </linearGradient>
        <linearGradient id="falloff" x1="400" y1="0" x2="640" y2="0" gradientUnits="userSpaceOnUse">
          <stop offset="0" stopColor="#555" stopOpacity=".2" />
          <stop offset="1" stopColor="#555" stopOpacity="0" />
        </linearGradient>
      </defs>

      <g clipPath="url(#body)" fill="none">
        {bands.map((v) => (
          <path key={v} d={curveAt(v)} stroke={shadeAt(v)} strokeWidth="4" />
        ))}
        <path d={curveAt(0.26)} stroke="#b9b9c0" strokeOpacity=".4" strokeWidth="4" />
        {streaks.map((v, i) => (
          <path
            key={v}
            d={curveAt(v)}
            stroke={i % 2 ? '#9c9ca2' : '#6c6c70'}
            strokeOpacity=".22"
            strokeDasharray={i % 2 ? '2 1 5 1 3 2' : '3 1 1 1 7 1'}
          />
        ))}
        <path d={curveAt(0.77)} stroke="#403f3d" strokeOpacity=".6" />
        <path d="M390 190h310v300H390z" fill="url(#falloff)" />
      </g>

      <path
        d="M346 403C370 388 398 376 420 375C438 375 451 381 451 395C451 412 440 424 430 433C418 445 405 457 392 463L395 467V477C389 477 383 472 378 465C365 447 354 424 346 403z"
        fill="url(#face)"
        stroke="#000"
      />
      <g clipPath="url(#face-outline)">
        <path d="M350 414L384 378M355 420L394 378" stroke="#999" strokeOpacity=".35" strokeWidth="2" />
        <path d="M358 428L404 376" stroke="#555" strokeOpacity=".5" strokeWidth="3" />
      </g>
      <g clipPath="url(#leftHole)">
        <path d="M365 380h90v90h-90z" fill="url(#bore)" />
        <path d="M370 416Q410 412 446 400" stroke="#4a4a4a" fill="none" />
        <path d="M370 422Q410 418 446 406M370 427Q400 425 446 413" stroke="#8b8b90" strokeOpacity=".3" strokeDasharray="3 1 5 1" fill="none" />
      </g>
      <path
        d="M392 463C376 444 370 428 370 415C370 397 400 385 423 384C438 384 444 390 444 400C444 414 438 424 430 433C420 445 404 457 392 463"
        fill="none"
        stroke="#000"
      />

      <path
        d="M842 194C825 198 806 207 797 215C788 222 785 228 785 233C786 248 812 258 849 259C843 240 840 222 842 194z"
        fill="url(#rightFace)"
      />
      <path
        d="M845 258C835 236 833 217 816 216C802 217 792 228 793 236C795 246 812 256 845 258z"
        fill="url(#rightBore)"
        stroke="#000"
      />
      <path
        d="M849 259C843 240 840 222 842 194C825 198 806 207 797 215C788 222 785 228 785 233C786 248 812 258 846 259Q870 259 891 254C888 268 884 273 876 277"
        fill="none"
        stroke="#000"
      />
    </svg>
  );
}

export default function App() {
  return (
    <div className="flex h-screen flex-col overflow-hidden bg-[#3b4453] font-['Open_Sans','Noto_Sans',sans-serif] text-[12px]">
      <TabStrip />
      <Ribbon />
      <QuickAccessBar />
      <div className="flex min-h-0 flex-1">
        <ModelBrowser />
        <main className="min-w-0 flex-1 bg-linear-to-b from-[#2f2f2f] to-[#606060]">
          <PipeModel />
        </main>
      </div>
    </div>
  );
}
